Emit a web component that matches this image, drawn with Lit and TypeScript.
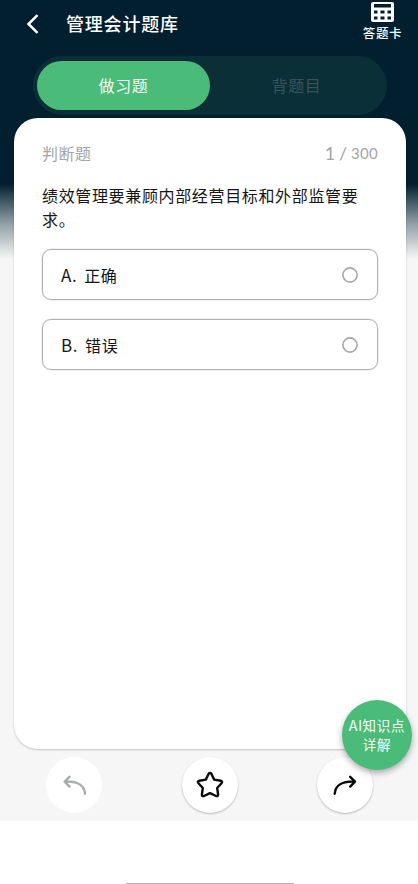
import { LitElement, html, css } from "lit";
import { customElement, property, state } from "lit/decorators.js";
import { classMap } from "lit/directives/class-map.js";

@customElement("answer-option")
class AnswerOption extends LitElement {
  @property() letter = "";
  @property() label = "";

  static styles = css`
    :host {
      display: flex;
      align-items: center;
      box-sizing: border-box;
      height: 51px;
      padding: 0 19px 0 18px;
      border: 1px solid #b0b0b0;
      box-shadow: 0 0 0 0.5px #e4e4e4;
      border-radius: 9px;
      font-size: 16px;
      line-height: 24px;
      letter-spacing: 0.6px;
      color: #161616;
    }
    .letter { margin-right: 7px; font-size: 17px; }
    .label { flex: 1; }
    svg { width: 16px; height: 16px; }
  `;

  render() {
    return html`
      <span class="letter">${this.letter}.</span>
      <span class="label">${this.label}</span>
      <svg viewBox="0 0 16 16"><circle cx="8" cy="8" r="7.1" fill="none" stroke="#a6a6a6" stroke-width="1.6" /></svg>
    `;
  }
}

@customElement("app-root")
class AppRoot extends LitElement {
  @state() private tab = 0;

  private tabs = ["做习题", "背题目"];
  private options = [
    { letter: "A", label: "正确" },
    { letter: "B", label: "错误" },
  ];

  static styles = css`
    :host {
      display: block;
      position: relative;
      box-sizing: border-box;
      height: 884px;
      overflow: hidden;
      background: #fff;
      font-family: "Noto Sans CJK SC", sans-serif;
    }
    .screen {
      display: flex;
      flex-direction: column;
      height: 821px;
      background: linear-gradient(#011f2f 0, #011f2f 184px, #8c9ba3 222px, #f6f6f6 259px);
    }
    header {
      display: flex;
      align-items: flex-start;
      height: 56px;
      color: #fff;
    }
    .back { margin: 14px 0 0 25px; width: 16px; height: 20px; }
    h1 {
      flex: 1;
      margin: 10px 0 0 25px;
      font-size: 18px;
      line-height: 26px;
      font-weight: 500;
      letter-spacing: 0.8px;
    }
    .sheet {
      display: flex;
      flex-direction: column;
      align-items: center;
      width: 71px;
      font-size: 12.5px;
      line-height: 18px;
      letter-spacing: 0.6px;
      font-weight: 500;
    }
    .sheet svg { margin-top: 2px; width: 23px; height: 20px; }
    .sheet span { margin-top: 2px; }
    .tabs {
      display: flex;
      box-sizing: border-box;
      width: 354px;
      height: 59px;
      margin-left: 33px;
      padding: 5px 4px;
      border-radius: 30px;
      background: #0b2f37;
    }
    .tab {
      flex: 1;
      height: 49px;
      border-radius: 25px;
      line-height: 48px;
      text-align: center;
      font-size: 16px;
      letter-spacing: 0.6px;
      color: #36535a;
    }
    .tab.active { background: #4abb78; color: #f2fff6; }
    .card {
      box-sizing: border-box;
      height: 631px;
      margin: 3px 12px 0 14px;
      padding: 23px 28px 0;
      border-radius: 24px;
      background: #fff;
      box-shadow: 0 1px 2px rgba(0, 0, 0, 0.22);
    }
    .meta {
      display: flex;
      justify-content: space-between;
      height: 24px;
      line-height: 24px;
      font-size: 16px;
      letter-spacing: 0.5px;
      color: #a5a5a5;
    }
    .count { font-family: Lato, sans-serif; font-size: 18px; letter-spacing: 0; word-spacing: -0.8px; }
    .total { font-size: 15px; letter-spacing: 0.3px; vertical-align: 1px; }
    .question {
      margin: 18px 0;
      font-size: 16px;
      line-height: 24px;
      letter-spacing: 0.65px;
      color: #161616;
    }
    .options { display: flex; flex-direction: column; gap: 19px; }
    .actions {
      display: flex;
      justify-content: space-between;
      margin: 8px 45px 0 46px;
    }
    .round {
      display: grid;
      place-items: center;
      width: 56px;
      height: 56px;
      border-radius: 50%;
      background: #fff;
      color: #0a0a0a;
      box-shadow: 0 1px 2px rgba(0, 0, 0, 0.25);
    }
    .round.disabled { color: #a9acab; box-shadow: none; }
    .ai {
      position: absolute;
      left: 342px;
      top: 700px;
      display: flex;
      flex-direction: column;
      justify-content: center;
      width: 70px;
      height: 70px;
      border-radius: 50%;
      background: #4abb78;
      color: #f4fff8;
      text-align: center;
      font-size: 13.5px;
      line-height: 19px;
      letter-spacing: 0.75px;
      white-space: nowrap;
      box-shadow: 0 3px 6px rgba(0, 0, 0, 0.32);
    }
    .latin { font-size: 14.5px; letter-spacing: 0.4px; line-height: 1; }
    .home {
      position: absolute;
      left: 126px;
      bottom: 0;
      width: 168px;
      height: 1px;
      background: #b0b0b0;
    }
  `;

  private arrow() {
    return html`<svg width="24" height="24" viewBox="0 0 24 24" fill="none" stroke="currentColor"
      stroke-width="2.4" stroke-linecap="round" stroke-linejoin="round">
      <path d="M1.7 20.8C2.2 12.5 9.5 7.9 22 8.6M17.2 3.8 22 8.6l-4.8 5" />
    </svg>`;
  }

  render() {
    return html`
      <div class="screen">
        <header>
          <svg class="back" viewBox="0 0 16 20" fill="none" stroke="#fff" stroke-width="2.5">
            <path d="M12.5 1.2 3.5 10l9 8.8" />
          </svg>
          <h1>管理会计题库</h1>
          <div class="sheet">
            <svg viewBox="0 0 23 20">
              <path fill="#fff" fill-rule="evenodd" d="M2 0H21Q23 0 23 2V18Q23 20 21 20H2Q0 20 0 18V2Q0 0 2 0ZM3 2V5.500H20V2ZM3 8.500V11.500H6.500V8.500ZM9.500 8.500V11.500H13.500V8.500ZM16.500 8.500V11.500H20V8.500ZM3 14.500V17.500H6.500V14.500ZM9.500 14.500V17.500H13.500V14.500ZM16.500 14.500V17.500H20V14.500Z" />
            </svg>
            <span>答题卡</span>
          </div>
        </header>
        <nav class="tabs">
          ${this.tabs.map((t, i) => html`<div
            class=${classMap({ tab: true, active: this.tab === i })}
            @click=${() => (this.tab = i)}>${t}</div>`)}
        </nav>
        <main class="card">
          <div class="meta">
            <span>判断题</span>
            <span class="count">1 / <span class="total">300</span></span>
          </div>
          <p class="question">绩效管理要兼顾内部经营目标和外部监管要求。</p>
          <div class="options">
            ${this.options.map((o) => html`<answer-option .letter=${o.letter} .label=${o.label}></answer-option>`)}
          </div>
        </main>
        <div class="actions">
          <div class="round disabled">
            <svg width="24" height="24" viewBox="0 0 24 24" fill="none" stroke="currentColor"
              stroke-width="2.4" stroke-linecap="round" stroke-linejoin="round">
              <path d="M23 20.8C22.5 12.5 15.2 7.9 2.7 8.6M7.5 3.8 2.7 8.6l4.8 5" />
            </svg>
          </div>
          <div class="round">
            <svg width="28" height="28" viewBox="0 0 28 28" fill="none" stroke="currentColor"
              stroke-width="2.4" stroke-linejoin="round">
              <path d="M12.7 2.8Q14 .9 15.3 2.8L18.2 8.6 24.7 9.7Q27 10.3 25.5 12.2L21.2 17 22.1 23.5Q22.2 25.7 20 25L14 22.1 8 25Q5.8 25.7 5.9 23.5L6.800 17 2.500 12.200Q1 10.300 3.300 9.700L9.800 8.600Z" />
            </svg>
          </div>
          <div class="round">${this.arrow()}</div>
        </div>
      </div>
      <div class="ai"><span><span class="latin">AI</span>知识点</span><span>详解</span></div>
      <div class="home"></div>
    `;
  }
}
